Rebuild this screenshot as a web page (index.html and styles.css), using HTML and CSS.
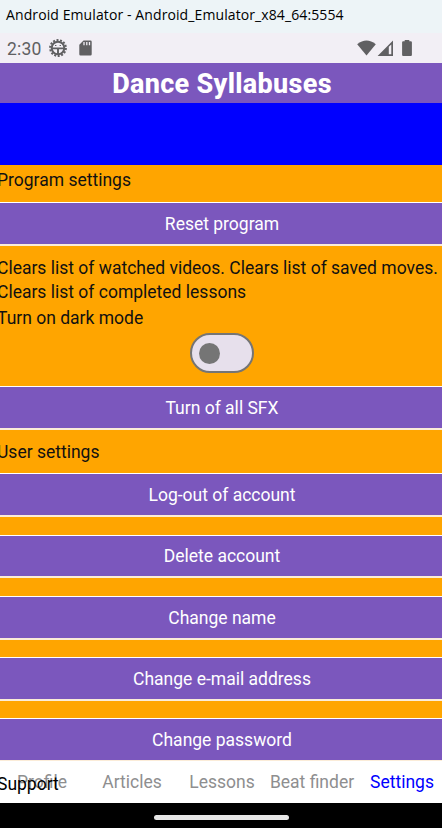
FILE: index.html
```
<!DOCTYPE html>
<html lang="en">
<head>
    <meta charset="UTF-8">
    <meta name="viewport" content="width=device-width, initial-scale=1.0">
    <title>Dance Syllabuses</title>
    <link rel="stylesheet" href="styles.css">
</head>
<body>
    <div class="window-title"><span>Android Emulator - Android_Emulator_x84_64:5554</span></div>
    <div class="status-bar">
        <span class="time">2:30</span>
        <svg class="gear" width="18" height="18" viewBox="0 0 18 18">
            <circle cx="9" cy="9" r="7.9" fill="none" stroke="#606062" stroke-width="2" stroke-dasharray="2 1.546"/>
            <circle cx="9" cy="9" r="6.3" fill="none" stroke="#606062" stroke-width="2"/>
            <path d="M3 9.4h12M9 9v6.5" stroke="#606062" stroke-width="1.9"/>
            <path d="M6 6.5h1.4M10.6 6.5h1.4" stroke="#606062" stroke-width="1.2"/>
        </svg>
        <svg class="sd" width="13" height="16" viewBox="0 0 13 16">
            <path d="M4.5 0.5h7a1.2 1.2 0 0 1 1.2 1.2v12.6a1.2 1.2 0 0 1-1.2 1.2h-10a1.2 1.2 0 0 1-1.2-1.2V4.8z" fill="#606062"/>
            <path d="M5 2v3.2M7.8 2v3.2M10.5 2v3.2" stroke="#f2eff5" stroke-width="1.3"/>
        </svg>
        <svg class="signals" width="56" height="18" viewBox="0 0 56 18">
            <path d="M0.2 5.3Q9.5-2.2 18.8 5.3L9.5 16.6z" fill="#606062"/>
            <path d="M20.6 17L36 1.5V17zM31.8 7.8V15.3h2.5V5.4z" fill="#606062" fill-rule="evenodd"/>
            <path d="M47.7 1h4.6v1.2h1.5a1.1 1.1 0 0 1 1.1 1.1v12.6a1.1 1.1 0 0 1-1.1 1.1h-7.6a1.1 1.1 0 0 1-1.1-1.1V3.3a1.1 1.1 0 0 1 1.1-1.1h1.5z" fill="#606062"/>
        </svg>
    </div>

    <h1 class="app-title">Dance Syllabuses</h1>
    <div class="banner"></div>

    <!-- Settings list -->
    <div class="settings">
        <p class="label program">Program settings</p>
        <button class="btn">Reset program</button>
        <div class="info">
            <p class="label">Clears list of watched videos. Clears list of saved moves.<br>Clears list of completed lessons</p>
            <p class="label dark-mode">Turn on dark mode</p>
            <div class="switch"><span class="thumb"></span></div>
        </div>
        <button class="btn">Turn of all SFX</button>
        <p class="label user">User settings</p>
        <div class="account">
            <button class="btn">Log-out of account</button>
            <button class="btn">Delete account</button>
            <button class="btn">Change name</button>
            <button class="btn">Change e-mail address</button>
            <button class="btn">Change password</button>
        </div>
    </div>

    <!-- Bottom tabs -->
    <div class="tabs">
        <span class="tab">Profile</span>
        <span class="tab">Articles</span>
        <span class="tab">Lessons</span>
        <span class="tab">Beat finder</span>
        <span class="tab active">Settings</span>
        <span class="support">Support</span>
    </div>
    <div class="nav-bar"><div class="handle"></div></div>
</body>
</html>
```
FILE: styles.css
```
* {
    box-sizing: border-box;
}

body {
    margin: 0;
    width: 442px;
    height: 828px;
    overflow: hidden;
    background: #fff;
    font-family: Roboto, sans-serif;
    font-size: 17.5px;
    color: #111;
}

.window-title {
    height: 33px;
    padding-left: 6px;
    line-height: 30px;
    background: #edf4f7;
    font-family: "Open Sans", sans-serif;
    font-size: 14px;
    letter-spacing: 0.1px;
    color: #000;
    white-space: nowrap;
}

.status-bar {
    display: flex;
    align-items: center;
    height: 30px;
    padding: 0 29px 0 7px;
    background: #f2eff5;
    color: #606062;
}

.time {
    width: 42px;
    padding-top: 2px;
    font-size: 17.5px;
    letter-spacing: 0.2px;
}

.sd {
    margin-left: 12px;
}

.signals {
    margin-left: auto;
}

.app-title {
    height: 40px;
    margin: 0 -5px 0 -3px;
    background: #7b57bd;
    color: #fff;
    font-size: 27px;
    font-weight: 800;
    letter-spacing: 0.3px;
    line-height: 42px;
    text-align: center;
}

.banner {
    height: 62px;
    background: #0000ff;
}

/* the list is a bit wider than the screen */
.settings {
    height: 596px;
    margin: 0 -5px 0 -3px;
    background: #ffa500;
}

.label {
    margin: 0;
    line-height: 24px;
    white-space: nowrap;
}

.program {
    height: 37px;
    padding-top: 3.4px;
}

.btn {
    display: block;
    width: 100%;
    height: 43.7px;
    padding: 1px 0 0;
    border: 0 solid #fff;
    border-width: 1px 0 2px;
    border-bottom-color: #fbecd8;
    background: #7b57bd;
    color: #fff;
    font: inherit;
}

.info {
    height: 140.3px;
    padding-top: 10.3px;
}

.dark-mode {
    margin-top: 2px;
}

.switch {
    display: flex;
    align-items: center;
    width: 64px;
    height: 40px;
    margin: 3.5px auto 0;
    padding-left: 7px;
    border: 2px solid #757575;
    border-radius: 20px;
    background: #e7e0ec;
}

.thumb {
    width: 21px;
    height: 21px;
    border-radius: 50%;
    background: #757575;
}

.user {
    height: 43.7px;
    padding-top: 10.5px;
}

.account {
    display: flex;
    flex-direction: column;
    gap: 17.6px;
}

.account .btn {
    flex: none;
}

.tabs {
    position: relative;
    display: flex;
    height: 42px;
    margin: 0 -5px 0 -3px;
    background: #fff;
}

.tab {
    width: 90px;
    line-height: 42px;
    text-align: center;
    color: #8e8e8f;
}

.active {
    color: #0000ff;
}

/* last list row showing through the tab bar */
.support {
    position: absolute;
    top: 11px;
    left: 0;
    line-height: 24px;
    color: #000;
}

.nav-bar {
    height: 25px;
    padding-top: 12px;
    background: #000;
}

.handle {
    width: 135px;
    height: 5px;
    margin: 0 auto;
    border-radius: 3px;
    background: #e6e6e6;
}
```
